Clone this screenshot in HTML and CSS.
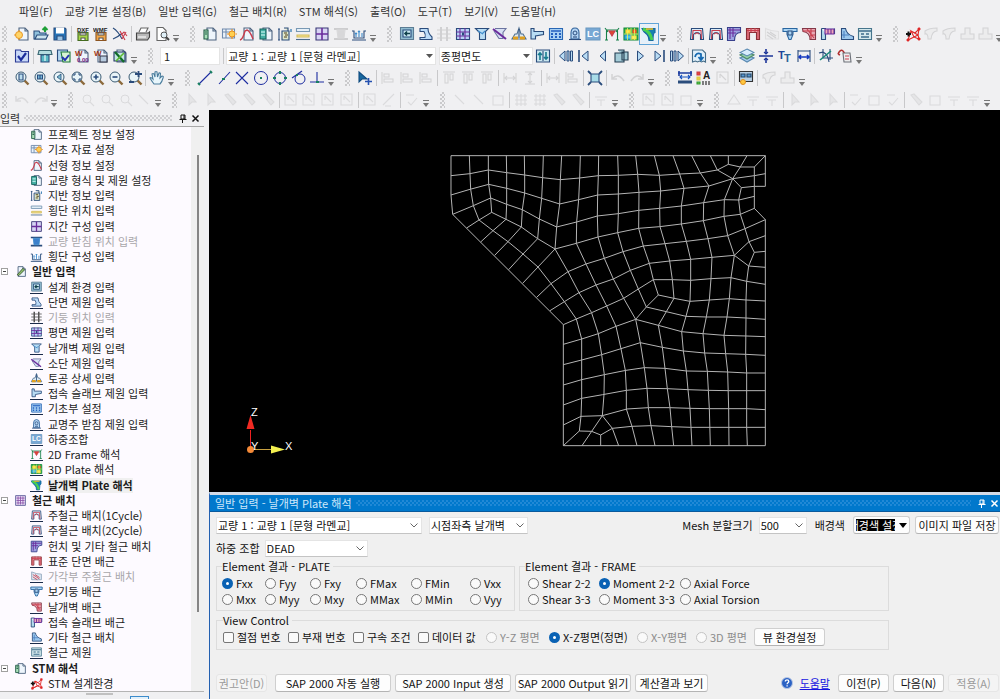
FILE: index.html
```html
<!DOCTYPE html>
<html lang="ko">
<head>
<meta charset="utf-8">
<title>날개벽 Plate 해석</title>
<link rel="stylesheet" href="styles.css">
</head>
<body>
<header class="top">
  <nav class="menu">
    <button>파일(F)</button><button>교량 기본 설정(B)</button><button>일반 입력(G)</button><button>철근 배치(R)</button><button>STM 해석(S)</button><button>출력(O)</button><button>도구(T)</button><button>보기(V)</button><button>도움말(H)</button>
  </nav>
  <div id="toolbars"></div>
</header>
<main class="work">
  <aside class="side">
    <div class="side-head"><span>입력</span><i class="dots"></i>
      <button class="mini" aria-label="고정"><svg viewBox="0 0 9 9"><path d="M3 1h4v4H3zM1.500 5.500h7M4.500 5.500V9" fill="none" stroke="#111"/><path d="M6 1v4" stroke="#111"/></svg></button>
      <button class="mini" aria-label="닫기"><svg viewBox="0 0 9 9"><path d="M1.500 1.500l6 6M7.500 1.500l-6 6" stroke="#111" stroke-width="1.500"/></svg></button>
    </div>
    <div class="side-body">
      <ul class="tree" id="tree"></ul>
      <div class="scroll"><i></i></div>
    </div>
    <div class="side-foot"><i class="handle"></i><i class="tab"></i></div>
  </aside>
  <section class="right">
    <div class="view">
      <svg id="model" viewBox="209 110 791 382" preserveAspectRatio="xMinYMin meet" role="img" aria-label="날개벽 요소망">
        <g id="mesh" transform="translate(440 145) scale(.33333)"></g>
        <g class="axis">
          <path d="M250.500 448V430" stroke="#f02020"/><path d="M250.500 415l4 14h-8z" fill="#f02a22"/>
          <path d="M252 449.500h20" stroke="#c8a040"/><path d="M285 449.500l-14-4v8z" fill="#f4f050"/>
          <circle cx="250.500" cy="449.500" r="3.500" fill="#f58a38"/>
          <text x="251" y="416">Z</text><text x="285" y="450">X</text><text x="251" y="450">Y</text>
        </g>
      </svg>
    </div>
    <section class="panel">
      <div class="panel-head"><span>일반 입력 - 날개벽 Plate 해석</span><i class="dots"></i>
        <button class="mini" aria-label="고정"><svg viewBox="0 0 9 9"><path d="M3 1h4v4H3zM1.500 5.500h7M4.500 5.500V9M6 1v4" fill="none" stroke="#fff"/></svg></button>
        <button class="mini" aria-label="닫기"><svg viewBox="0 0 9 9"><path d="M1.500 1.500l6 6M7.500 1.500l-6 6" stroke="#fff" stroke-width="1.500"/></svg></button>
      </div>
      <form class="panel-body">
        <div class="line">
          <select class="sel w-bridge" aria-label="교량"><option>교량 1 : 교량 1 [문형 라멘교]</option></select>
          <select class="sel w-wing" aria-label="날개벽 위치"><option>시점좌측 날개벽</option></select>
          <span class="fill"></span>
          <label for="mesh-size">Mesh 분할크기</label>
          <select class="sel w-mesh" id="mesh-size"><option>500</option></select>
          <span class="bg-label">배경색</span>
          <button type="button" class="btn color" aria-label="배경색 설정"><span><b>배경색 설정</b></span><i></i></button>
          <button type="button" class="btn w-save">이미지 파일 저장</button>
        </div>
        <div class="line second">
          <label for="combo">하중 조합</label>
          <select class="sel w-combo" id="combo"><option>DEAD</option></select>
        </div>
        <div class="sets">
          <fieldset class="plate"><legend>Element 결과 - PLATE</legend>
            <div class="grid6">
              <label><input type="radio" name="p" checked>Fxx</label><label><input type="radio" name="p">Fyy</label><label><input type="radio" name="p">Fxy</label><label><input type="radio" name="p">FMax</label><label><input type="radio" name="p">FMin</label><label><input type="radio" name="p">Vxx</label>
              <label><input type="radio" name="p">Mxx</label><label><input type="radio" name="p">Myy</label><label><input type="radio" name="p">Mxy</label><label><input type="radio" name="p">MMax</label><label><input type="radio" name="p">MMin</label><label><input type="radio" name="p">Vyy</label>
            </div>
          </fieldset>
          <fieldset class="frame"><legend>Element 결과 - FRAME</legend>
            <div class="grid3">
              <label><input type="radio" name="f">Shear 2-2</label><label><input type="radio" name="f" checked>Moment 2-2</label><label><input type="radio" name="f">Axial Force</label>
              <label><input type="radio" name="f">Shear 3-3</label><label><input type="radio" name="f">Moment 3-3</label><label><input type="radio" name="f">Axial Torsion</label>
            </div>
          </fieldset>
          <fieldset class="control"><legend>View Control</legend>
            <div class="grid9">
              <label><input type="checkbox">절점 번호</label><label><input type="checkbox">부재 번호</label><label><input type="checkbox">구속 조건</label><label><input type="checkbox">데이터 값</label>
              <label class="off"><input type="radio" name="v" disabled>Y-Z 평면</label><label><input type="radio" name="v" checked>X-Z평면(정면)</label><label class="off"><input type="radio" name="v" disabled>X-Y평면</label><label class="off"><input type="radio" name="v" disabled>3D 평면</label>
              <button type="button" class="btn">뷰 환경설정</button>
            </div>
          </fieldset>
        </div>
        <div class="foot">
          <button type="button" class="btn w-s" disabled>권고안(D)</button>
          <button type="button" class="btn w-l lead">SAP 2000 자동 실행</button>
          <button type="button" class="btn w-l">SAP 2000 Input 생성</button>
          <button type="button" class="btn w-l">SAP 2000 Output 읽기</button>
          <button type="button" class="btn w-m">계산결과 보기</button>
          <span class="fill"></span>
          <svg class="help" viewBox="0 0 12 12"><circle cx="6" cy="6" r="5.500" fill="#2b62c4" stroke="#b9c8e4"/><path d="M4.300 4.600c0-2.200 3.500-2.200 3.500 0 0 1.200-1.700 1.300-1.700 2.600M6.100 8.200v1.300" fill="none" stroke="#fff" stroke-width="1.300"/></svg>
          <a href="#help">도움말</a>
          <button type="button" class="btn w-s">이전(P)</button>
          <button type="button" class="btn w-s">다음(N)</button>
          <button type="button" class="btn w-s" disabled>적용(A)</button>
        </div>
      </form>
    </section>
  </section>
</main>
<script src="app.js"></script>
</body>
</html>
```
FILE: styles.css
```css
* { box-sizing: border-box; }
html, body { height: 100%; margin: 0; }
body {
  display: flex; flex-direction: column; overflow: hidden;
  background: #f0f0f2; color: #1c1c1c;
  font: 11px/15px "Noto Sans CJK KR", "Noto Sans", sans-serif;
}
button, input, select { font: inherit; color: inherit; margin: 0; padding: 0; }
button { border: 0; background: none; white-space: nowrap; }
svg { display: block; }
.fill { flex: 1; }

.menu { display: flex; gap: 12px; height: 23px; padding-left: 19px; align-items: center; color: #333; }
.top { flex: none; overflow: hidden; }
.bar { display: grid; height: 22px; padding-left: 2px; }
.bar:last-child { height: 21px; }
.r1 { grid-template-columns: 188px 197px 290px 216px 120px; }
.r2 { grid-template-columns: 146px 579px 146px; }
.r3 { grid-template-columns: 183px 160px 320px 151px; }
.r4 { grid-template-columns: 66px 104px 268px 189px 85px 287px; }
.group { display: flex; align-items: center; padding-right: 11px; min-width: 0; }
.grip {
  flex: none; width: 5px; height: 16px; margin-right: 7px;
  background: repeating-conic-gradient(#cacacc 0 25%, transparent 0 50%) 0 0 / 4px 4px;
}
.items { display: flex; flex: 1; justify-content: space-between; align-items: center; min-width: 0; }
.tool { flex: none; width: 16px; height: 18px; }
.tool svg { width: 16px; height: 16px; margin: 1px 0; }
.tool.dim svg { opacity: .2; filter: grayscale(1); }
.r4 .tool.dim svg { opacity: .15; }
.tool.on { outline: 1px solid #5ea4d8; outline-offset: 1px; background: #e4f0fa; }
.sep { flex: none; width: 1px; height: 16px; background: #c8c8ca; }
.more { flex: none; width: 6px; height: 16px; }
.more svg { width: 6px; height: 7px; margin-top: 8px; }
.num, .tsel { height: 18px; border: 1px solid #e4e4e4; background-color: #fff; outline: 0; }
.num { width: 60px; padding-left: 3px; }
.tsel, .sel { appearance: none; border-radius: 0; padding-left: 1px; }
.tsel { background: #fff url("data:image/svg+xml,%3Csvg xmlns='http://www.w3.org/2000/svg' width='7' height='4'%3E%3Cpath d='M0 0h7L3.500 4z' fill='%23555'/%3E%3C/svg%3E") no-repeat right 2px center; }
.tsel.wide { width: 210px; }
.tsel.mid { width: 94px; }

.work { flex: 1; min-height: 0; display: grid; grid-template-columns: 209px 1fr; }
.side { display: flex; flex-direction: column; min-height: 0; padding-right: 5px; }
.side-head { display: flex; align-items: center; height: 17px; border-bottom: 1px solid #a8a8a8; color: #333; }
.dots { flex: 1; height: 6px; margin: 0 6px 0 4px; background: repeating-conic-gradient(#cfcfd2 0 25%, transparent 0 50%) 0 0 / 4px 4px; }
.mini { width: 9px; height: 9px; margin-right: 4px; }
.side-body { flex: 1; min-height: 0; display: flex; }
.tree { flex: 1; display: grid; grid-auto-rows: 1fr; margin: 0; padding: 0; list-style: none; background: #fdfaff; overflow: hidden; }
.tree li { display: flex; align-items: center; padding-left: 30px; gap: 5px; white-space: nowrap; min-height: 0; line-height: 15px; }
.tree li > svg { width: 13px; height: 13px; flex: none; }
.tree li.under > svg { border-bottom: 1px solid #1a2b4a; }
.tree li.root { padding-left: 1px; font-weight: 700; }
.tree li.root > svg { margin-left: 1px; }
.tree .box { width: 7px; height: 7px; border: 1px solid #a0a0a0; background: linear-gradient(#444, #444) center / 3px 1px no-repeat #fff; }
.tree li.off { color: #a8a6aa; }
.tree li.cur span { font-weight: 700; background: #f0f0f0; }
.scroll { width: 13px; background: #f0f0f0; padding: 28px 5px 79px 6px; }
.scroll i { display: block; height: 100%; background: #858585; }
.side-foot { flex: none; display: flex; height: 8px; border-top: 1px solid #b4b4b4; padding-left: 86px; }
.handle { width: 27px; height: 2px; margin-top: 1px; background: #c0c0c0; }
.tab { width: 19px; height: 4px; margin: 4px 0 0 17px; border: 1px solid #3c8ccc; border-bottom: 0; background: #e2f0fa; }

.right { display: flex; flex-direction: column; min-width: 0; min-height: 0; }
.view { flex: 1; min-height: 0; background: #000; overflow: hidden; }
#model { width: 100%; height: 100%; }
#mesh path { fill: none; stroke: #b4b4b4; stroke-width: 1px; vector-effect: non-scaling-stroke; }
.axis text { font: 11px "Liberation Sans", Arial, sans-serif; fill: #fff; }

.panel { flex: none; border-top: 3px solid #d4dbe6; border-left: 1px solid #2360b0; background: #f0f0f0; color: #111; }
.panel-head { display: flex; align-items: center; height: 17px; padding-left: 5px; background: #0078cc; color: #cfe8fb; border-bottom: 1px solid #0a5a9c; }
.panel-head .dots { background-image: repeating-conic-gradient(#2189d6 0 25%, transparent 0 50%); }
.panel-head .mini:last-child { margin-right: 1px; }
.panel-body { padding: 4px 1px 7px 6px; }
.line { display: flex; align-items: center; height: 18px; white-space: nowrap; }
.second { margin-top: 5px; gap: 5px; }
.sel {
  height: 17px; border: 1px solid #e4e4e4; border-bottom-color: #c4c4c4;
  background: #fff url("data:image/svg+xml,%3Csvg xmlns='http://www.w3.org/2000/svg' width='8' height='5'%3E%3Cpath d='M.500.500L4 4l3.500-3.500' fill='none' stroke='%23666'/%3E%3C/svg%3E") no-repeat right 3px center;
}
.w-bridge { width: 206px; margin-right: 7px; }
.w-wing { width: 99px; }
.w-mesh { width: 48px; margin: 0 8px 0 6px; }
.w-combo { width: 103px; }
.bg-label { margin-right: 8px; }
.btn { height: 18px; border: 1px solid #cfcfcf; border-bottom-color: #b4b4b4; border-radius: 3px; background: #fdfdfd; line-height: 15px; text-align: center; }
.btn:disabled { color: #9a9a9a; background: #f4f4f4; border-color: #e6e6e6; }
.color { display: flex; align-items: center; width: 57px; padding-left: 2px; gap: 4px; margin-right: 5px; }
.color span { width: 39px; height: 12px; overflow: hidden; display: flex; justify-content: center; background: #000; color: #fff; line-height: 12px; }
.color b { font-weight: 400; flex: none; }
.color i { border: 4px solid transparent; border-top: 5px solid #000; border-bottom: 0; }
.w-save { width: 84px; }
.sets { display: grid; grid-template-columns: 299px 370px; gap: 3px 4px; margin-top: 3px; }
fieldset { min-width: 0; margin: 0; padding: 3px 0 3px 5px; border: 1px solid #dcdcdc; }
legend { padding: 0 3px 0 0; line-height: 12px; }
fieldset label { display: flex; align-items: center; gap: 3px; white-space: nowrap; }
.grid6, .grid3, .grid9 { display: grid; grid-auto-rows: 16px; }
.grid6 { grid-template-columns: 43px 45px 46px 55px 59px 1fr; }
.grid3 { grid-template-columns: 71px 81px 1fr; padding-left: 3px; }
.control { grid-column: 1 / 3; padding: 0 0 1px 6px; }
.grid9 { grid-auto-rows: 22px; align-items: center; grid-template-columns: 65px 65px 65px 68px 63px 88px 59px 58px 71px; }
.off { color: #8c8c8c; }
input[type=radio], input[type=checkbox] { appearance: none; flex: none; width: 11px; height: 11px; border: 1px solid #777; background: #fafafa; }
input[type=radio] { border-radius: 50%; }
input[type=checkbox] { border-radius: 2px; }
input[type=radio]:checked { border: 4px solid #0a62b4; background: #fff; }
input[type=radio]:disabled { border-color: #c4c4c4; }
.foot { display: flex; align-items: center; gap: 4px; margin-top: 24px; white-space: nowrap; }
.w-s { width: 51px; }
.w-m { width: 73px; }
.w-l { width: 116px; }
.lead { margin-left: 4px; }
.help { width: 12px; height: 12px; margin-right: 3px; }
.foot a { color: #1414e0; margin-right: 4px; }
```
FILE: app.js
```js
const N = '#2a4c7c', B = '#3f8ccc', L = '#b9dcf4', G = '#666', R = '#c83c4c', P = '#6a2c9c';
const p = (d, stroke = N, fill = 'none', w = 1.1) => `<path d="${d}" stroke="${stroke}" fill="${fill}" stroke-width="${w}"/>`;
const c = (x, y, r, stroke = N, fill = 'none') => `<circle cx="${x}" cy="${y}" r="${r}" stroke="${stroke}" fill="${fill}"/>`;
const t = (x, y, s, text, fill = N) => `<text x="${x}" y="${y}" font-size="${s}" font-family="Liberation Sans" font-weight="700" fill="${fill}">${text}</text>`;
const page = p('M5 2h6l3 3v9H5z', '#4f6480', '#eef5fc') + p('M11 2v3h3', '#4f6480');
const lens = p('M10.500 10.500l4 4', '#8c6a3c', 'none', 2.4) + c(7, 7, 5, '#3c5c74', '#e8f4f8');
const arch = p('M1.500 13.500l1-11h11l1 11h-3v-5q-3.500-4-7 0v5z', N, '#dcecf8') + p('M3.500 13l.500-8.500h8l.500 8.500M6 8q2-2 4 0', R);
const icons = {
  new: page + c(5, 9, 3.5, '#e89828', '#ffd468') + p('M5 4v2M5 12v2M0 9h2', '#e89828'),
  open: p('M1 13V5h5l1 2h6v6z', N, '#8fc0dc') + p('M2 13l2-4h11l-2 4z', N, '#cbe4f0') + p('M12 6V2M9.500 4L12 1.500 14.500 4', '#1fa038', 'none', 2),
  save: p('M2 2h11l1 1v11H2z', N, '#2674b8') + p('M4.500 2h7v5h-7z', '#fff', '#fff') + p('M5 14v-4h6v4', N, '#9cc4e4'),
  dxf: t(2, 6, 6, 'DXF', '#222') + p('M3 6.500h10v8H3z', '#456b20', '#a8d848') + p('M5 7h6v2H5zM6 14v-2h4v2', '#555', '#fff'),
  wmf: t(0, 6, 6, 'WMF', '#222') + p('M3 6.500h10v8H3z', '#8c5420', '#f4a848') + p('M5 7h6v2H5zM6 14v-2h4v2', '#555', '#fff'),
  cut: p('M1 2q5 3 9 11M1 13q5-2 8-5') + p('M8 5l5 9M14 6l-4 7M9 9l3-3 3 4', R),
  print: p('M4 6l2-4h7l-2 4', G, '#fff') + p('M1.500 7h12l1-1v5l-2 3h-11z', '#444', '#b8b8b8') + p('M3 11h8', '#fff'),
  preview: p('M3 1.500h6l3 3v10H3z', G, '#fff') + c(10, 9, 3, '#555', '#e0f0f8') + p('M12 11l3 3', '#444', 'none', 2),
  doc: page + p('M2 4h4v9H2z', '#245c48', '#a8e0b8') + p('M3 6h2M3 8h2', '#245c48'),
  base: p('M1.500 3h12v9h-12zM1.500 6h12M5 3v9', '#708aac', '#eaf2fb') + c(11, 8, 3, '#e89020', '#ffd050') + p('M11 3v2M11 11v2M6 8h2M15 8h1', '#e89020'),
  align: page + p('M1 14q3-1 5-9l2-1q3 1 6 9', R, 'none', 1.4),
  form: page + p('M2 3h6v10H2z', '#14605c', '#44b0a4') + p('M3 6h4M3 9h4', '#e0ffff'),
  ground: p('M2 3v11M1 3h2M1 14h2') + p('M5 5h7v9H5zM7 2h4v3', N, '#dfe7cc') + p('M7 7h3M8 9h3M7 11h3', '#504018') + p('M14 3v3', '#1468a8'),
  cross: p('M1.500 2.500h13v3h-13z', '#7898b4', '#e6f0f8') + p('M2 9h12v2H2z', '#d4bc5c', '#f4e490') + p('M1 13.500h14', '#4c6c8c'),
  span: p('M2 2h12v12H2z', '#3b3876', '#d8d4f4') + p('M8 2v12M2 8h12', P, 'none', 1.6),
  bearing: p('M1 3h14M1 13h14', N, 'none', 2) + p('M4 4h8l-1 8H5z', B, '#3d80cc'),
  section: p('M1 5h2v7h10V5h2M1 14h14') + p('M5 7v4M8 5v6M11 7v4M4 8l1-1 1 1M7 6l1-1 1 1', B),
  edit: page + p('M4 12l7-8 2 2-7 7z', '#3c5430', '#8cc06c'),
  rebars: p('M2 2h12v12H2z', '#5c5c98', '#ece0f8') + p('M5 3v10M8 3v10M11 3v10M3 5h10M3 8h10M3 11h10', '#8850a8', 'none', 1),
  env: p('M1.500 1.500h13v12h-13z', '#5b7c94', '#90bcd0') + p('M4 4h8v7H4z', N, '#c8e8f0') + p('M11 7.500H6M8 5.500l-2 2 2 2', '#10404c', 'none', 1.6),
  sec2: p('M2 2.500h8q0 5 4 8.500v2.500H2v-2h5q1-3-1-6H2z', N, '#bcdcf8'),
  column: p('M1 4h14M1 8h14M1 12h14', '#555') + p('M5 1v14M11 1v14', '#555', 'none', 2),
  plan: p('M1.500 2.500h13v11h-13z', N, '#b7d0f4') + p('M1 6h14M1 10h14M5 2v12M10 2v12', P) + p('M7 8h2', N, 'none', 3),
  wing: p('M1.500 2.500h13l-3 3v8h-6v-7z', N, '#b8dcf4') + p('M4 5l5 3M11 5L8 8', B),
  berm: p('M3 2.500h11l-3 4v6H7L2 5', '#6b74a0', '#d8e0f4') + p('M1 3l13 10', P, 'none', 2),
  earth: p('M1 13h14l-3-5h-2L8 2 6 8H4z', '#507090', '#dceaf4') + p('M2 12h5M9 12h5', '#e0a020', 'none', 3) + p('M8 3v9', N),
  slab: p('M2 2.500h3v3h9.500v3l-8 1.500v3H2z', N, '#b8dcf4'),
  found: p('M1.500 2.500h13v11h-13z', '#2866b4', '#a8d0f4') + p('M3 5h10', '#2460c0', 'none', 1.5) + p('M3 8h2M7 8h2M11 8h2M3 11h2M7 11h2M11 11h2', '#2460c0', 'none', 1.8),
  plate: p('M4 13V7q0-5 4-5t4 5v6z', '#32649c', '#b4d4f4') + c(8, 7, 2, N) + p('M2 13.500h12', N) + p('M6 11h4', N),
  lc: p('M1 2h14v12H1z', '#6b98c0', '#78a8d4') + t(2, 11, 9, 'LC', '#fff'),
  frame2d: p('M2.500 14V4h11v10M1 2l3 4M15 2l-3 4M1 14h3M12 14h3', '#168048') + p('M5 5h6l-3 5z', R, '#e04830'),
  plate3d: p('M1 2h14v12H1z', '#183', '#30b858') + p('M2 9h6v4H2z', '#28d', '#4ac8e0') + p('M3 4h4v3H3z', '#fc3', '#fe4') + p('M9 10h4v3H9z', '#fd4', '#fe6') + p('M10 4h3v3h-3z', '#e42', '#f82') + p('M1 8h14M8 2v12M4.500 2v12M11.500 2v12', '#e8f060', 'none', .8),
  wingplate: p('M1 2.500h13v4q-2 0-2 8h-4q0-4-2-6-4-3-5-6z', '#1868a0', '#1880b0') + p('M2 3q7 2 9 11', '#48d050', 'none', 3) + p('M5 3h7', '#f0c020', 'none', 1.5),
  rebar: arch,
  haunch: p('M1.500 1.500h13v5q-6 0-6 8h-7z', '#38408c', '#9ca4e0') + p('M4 2v11M7 2v9M2 4h12M2 7h8', P),
  std: p('M1.500 2.500h13v11h-3v-7h-7v7h-3z', '#8c3038', '#eca0a8') + p('M2 4.500h12M3 3v10M13 3v10M6 2v4M10 2v4', R),
  corner: p('M1.500 13V2.500q6 3 13 3V13z', '#8ba0b8', '#dce8f4') + p('M3 6l9 6M3 9l6 4M6 6l6 4', R),
  post: p('M1 2.500h14v3h-4v3l-2 5H7L5 8.500v-3H1z', '#2a66a0', '#aad4f4') + p('M6 5h4v4H6z', N),
  wingrb: p('M1.500 2.500h13v11H9q0-7-7-8z', '#843848', '#e8a8b4') + p('M2 5h12M6 3l7 9M10 3v10M9 9h5', R),
  slabrb: p('M1.500 2.500h4v5h9v-5M1.500 2.500v11h4v-6', N, '#b4dcec') + p('M5 3h9v5H5zM8 3v5M11 3v5', P, '#f0a8b8'),
  etc: p('M2.500 13.500v-11h4q1 6 8 8v3z', N, '#9cc8ee') + p('M5 5v7M3 9h7', '#4c80c0'),
  table: p('M1.500 2.500h13v11h-13z', '#46758c', '#d4e8ec') + p('M2 5h12M4 8h3M9 8h3M4 11h8', '#3c6c8c', 'none', 1.6),
  stm: p('M3 14l3-9 4 2 4-4-1 6 1 4-5-2-6 3 10-5-7-4 3 6', '#e02828') + p('M13 2h2v2h-2zM13 12h2v2h-2zM2 13h2v2H2z', '#e02828', '#e02828', .8) + p('M1 8h5M3.500 5.500v5', '#111', 'none', 2),
  ghost: p('M2 5q4-3 12-3v3q-5 0-6 8H5q0-6-3-5z', G, '#ddd'),
  tee: p('M5 2h5v6h4v5H1V8h4z', G, '#ddd'),
  check: p('M1.500 2h5l1 1.500h7v10.500h-13z', '#2b3a94', '#c8d8f8') + p('M4 8l3 4 5-7', '#1a2c9c', 'none', 2.2),
  plotter: p('M2 2.500h12l1 4H1z', '#3b6874', '#b4dce0') + p('M4 7h8v7H4z', N, '#58b8c4') + p('M8 7v6', '#fff'),
  chg: p('M1.500 2h10v11h-10z', N, '#b4d8f0') + p('M5 4h9v10H7z', '#1c7838', '#d8f4d4') + p('M6 9l3 3 4-5', '#2434b0', 'none', 2),
  word: page + t(1, 8, 8, 'W', '#a03818') + t(3, 14, 6, '0.00', '#702080'),
  word2: page + t(1, 8, 8, 'W', '#a03818') + p('M7 8h7v6H7z', '#334', '#b8cce0'),
  pen: page + p('M2 4h11v9H2z', '#236', '#c4e8e0') + p('M3 4l9 10', '#106c28', 'none', 2.2) + p('M12 5l-8 8', '#5cb830', 'none', 1.6),
  sync: p('M1.500 2h13v12h-13z', N, '#cce8f0') + p('M5 12V5M3 7l2-2 2 2M11 4v7M9 9l2 2 2-2', '#187c90', 'none', 1.6) + p('M8 3v10', N),
  prevpage: p('M7 3v10L1.500 8zM9 3h2v10H9zM12.500 3h2v10h-2z', N, L, 1),
  first: p('M3 2v12', N, L, 1.6) + p('M12 3v10L6 8z', N, L, 1),
  prev: p('M10.500 3v10L5 8z', N, L, 1), next: p('M5.500 3v10l6-5z', N, L, 1),
  pages: p('M5 2h6v9M2 5h9v9H2zM9 4h6v8H9z', '#223c50', '#a4ccd8'),
  last: p('M13 2v12', N, L, 1.6) + p('M4 3v10l6-5z', N, L, 1),
  nextpage: p('M9 3v10l5.500-5zM5 3h2v10H5zM1.500 3h2v10h-2z', N, L, 1),
  turn: p('M1.500 2h10l3 3v9l-2-1-2 1-2-1-2 1-2-1-3 1z', '#456c88', '#e0f0fa') + p('M4 9q1-5 6-3v5M7.500 9l2.500 3 2.500-3', '#1468b0', 'none', 1.8),
  layers: p('M8 7l7 3-7 4-7-4z', '#5888b0', '#a8ccf0') + p('M8 4l7 3-7 4-7-4z', '#4c8868', '#94d0a8') + p('M8 1l7 3.500L8 8 1 4.500z', '#5888b0', '#d8ecfc'),
  mid: p('M1 8h14M8 1v5M8 10v5', '#1c3498', 'none', 1.6) + p('M6 4l2 2 2-2M6 12l2-2 2 2', '#1c3498'),
  tt: t(1, 11, 11, 'T', '#1c4498') + t(7, 14, 11, 'T', '#2c6498'),
  dim: p('M2 2v12M14 2v12M2 3h12') + p('M3 9h10M5 7L3 9l2 2M11 7l2 2-2 2', '#1438c0', 'none', 1.6),
  axes: p('M5 1v9h10M1 5q8-3 10 9M12 1v11', N) + p('M2 12l11-9', '#188878', 'none', 1.6),
  note: p('M1 6q4-8 7 1M1 6l2 1', '#b03030', 'none', 1.6) + p('M6 5h7l1 9H7z', '#6c7078', '#eee') + p('M8 8h4M8 11h4', R),
  z1: lens + p('M5 4h4v6H5z', N, '#bde'), z2: lens + p('M4.500 5h5v4h-5zM7 5v4', N, '#7bd'), z3: lens + p('M9 4v6L5 7z', N, '#7bc', .8),
  z4: lens + p('M4 6V4h2M8 4h2v2M10 8v2H8M6 10H4V8'), z5: lens + p('M4.500 7h5M7 4.500v5', N, 'none', 1.6), z6: lens + p('M4.500 7h5', N, 'none', 1.6),
  z7: lens + p('M8 4h7M11.500 1v6M2 12h5', N, 'none', 1.8),
  hand: p('M5 14Q2 10 1 8q1-1 3 1L3 4q1-1 2 0l1 3V2q1-1 2 0l.500 5L10 3q1-.500 1.500.500L11 8l2-2q2 0 1 2-1 4-3 6z', '#4a7c9c', '#e8f6fc'),
  line1: p('M2 14L14 2', '#1c2ca0') + p('M1 13l2 2M13 1l2 2', '#188060', 'none', 2), line2: p('M3 14L14 2', '#1c2ca0') + p('M6 9h3', '#188060', 'none', 2),
  line3: p('M2 2l12 12M14 2L2 14', '#1c2ca0'), circ1: c(8, 8, 6.5, '#1c2ca0') + p('M7 8h2', '#188060', 'none', 2),
  circ2: c(8, 8, 5.5, '#1c2ca0') + p('M1 8h3M12 8h3M8 1v3M8 12v3', '#188060', 'none', 2), circ3: c(9, 9, 5, '#1c2ca0') + p('M1 8l10-7', '#1c2ca0') + p('M5 5h2', '#188060', 'none', 2),
  perp: p('M8 2v10M1 12h14', '#1c2ca0') + p('M7 12h3', '#188060', 'none', 2),
  pick: p('M2 2l8 7H5l-3 3z', '#104c80', '#1868a0') + p('M8 11.500h7M11.500 8v7', '#2450b0', 'none', 1.6),
  al: p('M2 2v12M4 4h5v3H4zM4 9h9v3H4z', G), at: p('M2 2h12M4 4h3v9H4zM9 4h3v6H9z', G), ah: p('M2 3v10M14 3v10M3 8h10M5 6L3 8l2 2M11 6l2 2-2 2', G),
  av: p('M3 2h10M3 14h10M8 3v10M6 5l2-2 2 2M6 11l2 2 2-2', G),
  fit: p('M4 4h8v8H4z', N, '#a8dce8') + p('M1 1l3 3M15 1l-3 3M1 15l3-3M15 15l-3-3', N, 'none', 1.8),
  undo: p('M2 9q6-7 12 2M2 4v5h5', G, 'none', 1.6), redo: p('M14 9Q8 2 2 11M14 4v5H9', G, 'none', 1.6),
  ruler: p('M1 3h14M2 1v5M14 1v5', '#1c3ca0', 'none', 1.6) + p('M3 7h10M5 5L3 7l2 2M11 5l2 2-2 2', '#1450c0') + p('M1 12h14', N, 'none', 3),
  color: p('M1 2h3v3H1z', R, '#e43') + p('M1 7h3v3H1z', '#dc4', '#ec4') + p('M1 12h3v2H1z', '#393', '#6c4') + t(7, 9, 10, 'A', '#222') + p('M7 11v4M10 11v4M13 11v4', '#222'),
  grid: p('M1.500 1.500h13v10h-13z', '#333', '#b8d0e4') + p('M3 4h4v3H3zM9 4h4v3H9z', '#246', '#5898d0') + c(5, 12, 2.5, '#e09020', '#ffc840'),
  ptr: p('M5 2l7 8H8l-3 3z', G, '#aaa'), leaf: p('M3 3l3-1 8 8-3 3z', G, '#aaa'), sheet: p('M2 2h11v11H2z', G) + p('M5 4l6 6M5 4v4', G), circ: c(7, 7, 4, G) + p('M10 10l4 4', G),
  mesh: p('M2 4h12M2 8h12M2 12h12M4 2v12M8 2v12M12 2v12', G), diag: p('M3 3l9 9', G), slash: p('M2 13L13 2M4 14h6', G),
  tri: p('M8 3l6 9H2z', G), ln: p('M2 5h12M4 8h8M8 8v6', G), tick: p('M2 3h8M4 10l3 3 6-7', G), quad: p('M3 4h10v9H3z', G)
};
const svg = n => `<svg viewBox="0 0 16 16" fill="none" aria-hidden="true">${icons[n]}</svg>`;
const more = '<button class="more" aria-label="더 보기"><svg viewBox="0 0 6 7"><path d="M0 .5h6" stroke="#777"/><path d="M0 3h6L3 7z" fill="#777"/></svg></button>';
const fields = {
  '#num': '<input class="num" value="1" aria-label="번호">',
  '#bridge': '<select class="tsel wide" aria-label="교량 선택"><option>교량 1 : 교량 1 [문형 라멘교]</option></select>',
  '#draw': '<select class="tsel mid" aria-label="도면 선택"><option>종평면도</option></select>'
};
/* "|" separator, "-" prefix disabled, "*" prefix pressed */
const bars = [
  ['new open save | dxf wmf cut | print preview', 'doc base align form ground cross span -bearing section',
   'env sec2 -column plan wing berm earth slab found plate lc frame2d plate3d *wingplate', 'rebar rebar haunch std -corner post wingrb slabrb etc table', 'stm -ghost -ghost -tee -tee'],
  ['check | plotter chg word word2 pen', '#num | #bridge #draw sync | prevpage first prev pages next last nextpage | turn', 'layers mid tt dim | axes note'],
  ['z1 z2 z3 z4 z5 z6 z7 | hand', 'line1 line2 line3 circ1 circ2 circ3 perp', 'pick | -al -al -al | -at -at -at | -ah -av | -ah -al | fit | -undo -redo', 'ruler color -sheet | grid | -ghost -tee'],
  ['-undo -redo', '-circ -circ -circ -diag', '-ptr -ptr -leaf -leaf -leaf | -sheet -sheet -sheet -sheet | -sheet -slash | -tick', '-diag -diag -quad | -mesh -mesh -leaf -leaf | -ln', '-sheet -sheet -quad', '-tri -ln -ln | -ptr -ptr -ptr | -tick -quad -tick | -leaf -quad -ln -ln']
];
const item = n => {
  if (n === '|') return '<i class="sep"></i>';
  if (fields[n]) return fields[n];
  const dim = n[0] === '-', on = n[0] === '*', id = n.replace(/^[-*]/, '');
  return `<button class="tool${dim ? ' dim' : ''}${on ? ' on' : ''}" aria-label="${id}"${dim ? ' disabled' : ''}>${svg(id)}</button>`;
};
document.getElementById('toolbars').innerHTML = bars.map((groups, i) =>
  `<div class="bar r${i + 1}" role="toolbar">` + groups.map(g =>
    `<div class="group"><i class="grip"></i><div class="items">${g.split(' ').map(item).join('')}${more}</div></div>`).join('') + '</div>').join('');

/* "+" root, "-" disabled, "_" underlined icon, "*" current */
const tree = [
  ['doc', '프로젝트 정보 설정'], ['base', '기초 자료 설정'], ['align', '선형 정보 설정'], ['form', '교량 형식 및 제원 설정'], ['ground', '지반 정보 입력'], ['cross', '횡단 위치 입력'], ['span', '지간 구성 입력'], ['bearing', '교량 받침 위치 입력', '-'], ['section', '횡단 구성 입력'],
  ['edit', '일반 입력', '+'], ['env', '설계 환경 입력', '_'], ['sec2', '단면 제원 입력', '_'], ['column', '기둥 위치 입력', '-_'], ['plan', '평면 제원 입력', '_'], ['wing', '날개벽 제원 입력', '_'], ['berm', '소단 제원 입력', '_'], ['earth', '토공 상세 입력', '_'], ['slab', '접속 슬래브 제원 입력', '_'], ['found', '기초부 설정', '_'], ['plate', '교명주 받침 제원 입력', '_'], ['lc', '하중조합', '_'], ['frame2d', '2D Frame 해석', '_'], ['plate3d', '3D Plate 해석', '_'], ['wingplate', '날개벽 Plate 해석', '*_'],
  ['rebars', '철근 배치', '+'], ['rebar', '주철근 배치(1Cycle)', '_'], ['rebar', '주철근 배치(2Cycle)', '_'], ['haunch', '헌치 및 기타 철근 배치'], ['std', '표준 단면 배근', '_'], ['corner', '가각부 주철근 배치', '-_'], ['post', '보기둥 배근'], ['wingrb', '날개벽 배근', '_'], ['slabrb', '접속 슬래브 배근'], ['etc', '기타 철근 배치', '_'], ['table', '철근 제원', '_'],
  ['doc', 'STM 해석', '+'], ['stm', 'STM 설계환경']
];
document.getElementById('tree').innerHTML = tree.map(([ic, label, f = '']) => {
  const cls = [f.includes('+') && 'root', f.includes('-') && 'off', f.includes('_') && 'under', f.includes('*') && 'cur'].filter(Boolean).join(' ');
  return `<li class="${cls}">${f.includes('+') ? '<i class="box"></i>' : ''}${svg(ic)}<span>${label}</span></li>`;
}).join('');

/* Element mesh polylines, in thirds of a pixel */
const upper = `33,32 976,32 976,124 943,124|943,66 943,190 976,224 976,902 370,902 370,539 38,208 33,150 33,32
33,92 90,86 145,75 200,83 254,90 308,98 361,104 419,99 475,92 533,91 593,88 658,91 719,87 781,84 832,75 865,58 865,32|865,58 901,66 943,66 976,32
33,150 90,133 146,118 200,130 254,144 305,160 359,177 416,164 473,150 535,147 597,142 662,138 732,130 807,123 878,101 943,92 976,86
38,208 100,182 152,159 200,178 247,194 298,222 350,246 410,231 472,213 535,206 596,196 659,190 724,183 791,173 853,164 897,165 943,154
878,101 904,128 943,124|904,128 896,165 901,208 915,251 927,290
80,249 117,225 155,202 198,223 244,246 293,281 345,312 409,295 474,276 533,263 596,250 659,245 724,237 790,227 852,214 901,208 943,190
88,32 90,86 92,133 100,182 117,225 159,257 204,290 249,327 294,366 333,416 373,470 409,522
122,291 159,257 198,223|164,331 204,290 244,246|206,374 249,327 293,281|248,415 294,366 345,312
290,457 333,416 384,380 438,357 493,340 549,320 610,303 675,296 739,289 804,281 863,272 915,251 976,224
330,497 373,470 417,443 468,420 520,402 571,376 628,355 689,348 752,343 816,337 883,331
883,331 927,290 976,272|883,331 926,363 976,367|927,290 943,322 926,363|943,322 976,319
370,539 409,522 455,503 500,483 551,460 595,432 640,404 697,404 752,406 813,401 873,398 920,409 976,418
145,32 145,75 146,118 152,159 155,202|199,32 200,83 200,178 198,223|253,32 254,90 254,144 247,194 244,246|310,32 308,98 305,160 298,222 293,281
365,32 361,104 359,177 350,246 345,312 384,380 417,443 455,503
421,32 419,99 416,164 410,231 409,295 438,357 468,420 500,483
476,32 475,92 473,150 472,213 474,276 493,340 520,402 551,460 587,523
533,32 535,91 535,206 533,263 549,320 571,376 595,432 619,486
587,32 593,88 597,142 596,250 610,303 628,355 640,404 655,450 702,460 750,469 808,465 868,461 918,465 976,468
643,32 658,91 662,138 659,190 660,245 675,296 689,348 697,404 702,460 679,500
699,32 719,87 732,130 724,183 724,237 739,289 752,343 752,406 750,469 738,514
755,32 781,84 807,123 791,173 790,227 804,281 816,337 813,401 808,465 799,516
811,32 832,75 878,101 853,164 852,214 863,272 883,331 873,398 868,461 861,516
921,32 901,66 878,101|926,363 920,409 918,465 918,519
655,450 619,486 587,523|619,486 679,500 738,514 799,516 861,516 918,519 976,523`;
const lower = `257,28 325,46 395,65 459,71 522,76 588,78 646,80
40,103 95,87 145,71 198,49 257,28
40,164 95,150 155,134 213,116 271,98 337,112 400,123 464,129 527,131 588,133 646,136
40,225 95,209 163,194 228,181 283,173 345,175 409,183 470,184 533,186 590,189 646,189
40,285 95,265 158,254 229,241 291,235 352,236 414,239 475,241 536,242 646,242
40,345 93,319 157,317 231,297 295,293 359,293 420,295 478,296 590,296 646,299
40,407 88,363 125,364 152,375 187,355 246,349 303,347 365,350 422,352 646,352
157,317 187,355 206,407|157,317 125,364 96,407|152,375 152,407|93,319 88,363
79,27 95,87 95,265 93,319|125,9 145,71 155,134 163,194 162,254 157,317
170,-12 198,49 213,116 226,181 229,241 229,297 246,349 261,407
257,28 271,98 283,173 291,235 295,293 303,347 315,407
349,5 325,46 337,112 345,175 352,236 360,293 365,350 371,407
408,19 395,65 400,123 409,183 414,239 420,295 423,352 426,407
469,21 459,71 464,129 472,184 475,241 478,296 481,407
531,21 522,76 527,131 533,186 536,296 537,407
588,24 587,133 590,189 590,352 592,407`;
const paths = s => s.split(/[|\n]/).map(l => `<path d="M${l.trim().replace(/ /g, 'L')}"/>`).join('');
document.getElementById('mesh').innerHTML = paths(upper) + `<g transform="translate(330 495)">${paths(lower)}</g>`;
```
